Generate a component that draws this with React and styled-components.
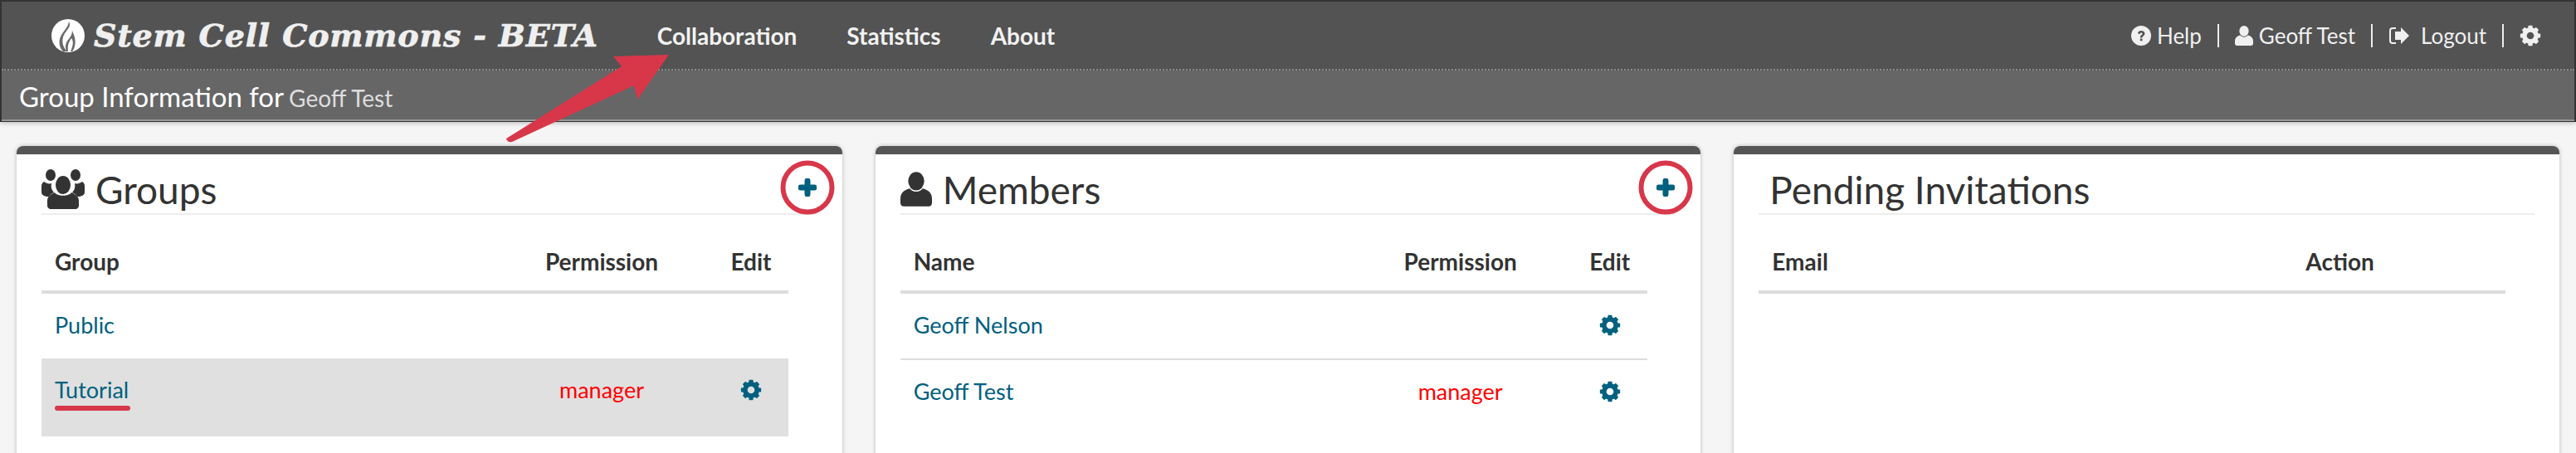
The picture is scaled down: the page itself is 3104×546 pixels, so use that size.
import React from 'react'
import styled, { createGlobalStyle } from 'styled-components'

const GlobalStyle = createGlobalStyle`
  html, body { margin: 0; padding: 0; background: #f5f5f5; }
  body { font-family: "Lato", "Noto Sans", sans-serif; color: #333; }
`

const Page = styled.div`
  position: relative;
  height: 546px;
  overflow: hidden;
  background: #f5f5f5;
`

const Header = styled.header`
  border: 2px solid #333;
  border-bottom-width: 1px;
  box-shadow: 0 2px 5px rgba(0, 0, 0, 0.2);
`

const NavBar = styled.nav`
  display: flex;
  align-items: center;
  height: 81px;
  padding: 0 40px 0 60px;
  background: #535353;
  border-bottom: 2px dotted #8a8a8a;
  box-sizing: content-box;
`

const Brand = styled.div`
  display: flex;
  align-items: center;
  gap: 11px;
  margin-right: 41px;
`

const BrandName = styled.span`
  font-family: "DejaVu Serif", serif;
  font-weight: 700;
  font-style: italic;
  font-size: 38px;
  letter-spacing: 0.8px;
  -webkit-text-stroke: 0.7px #efefef;
  color: #efefef;
  white-space: nowrap;
`

const NavLink = styled.a`
  margin: 0 30px;
  font-size: 28px;
  font-weight: 700;
  color: #f2f2f2;
  white-space: nowrap;
`

const UserMenu = styled.div`
  display: flex;
  align-items: center;
  margin-left: auto;
  font-size: 26px;
  color: #f0f0f0;
`

const MenuItem = styled.span`
  display: flex;
  align-items: center;
  gap: ${(p) => p.$gap || 7}px;
  white-space: nowrap;
`

const MenuDivider = styled.span`
  width: 2px;
  height: 28px;
  margin: 0 19px;
  background: #e8eef2;
`

const SubHeader = styled.div`
  display: flex;
  align-items: baseline;
  gap: 6px;
  height: 61px;
  padding: 11px 21px 0;
  box-sizing: border-box;
  background: #666;
  border-bottom: 2px solid #999;
  color: #fff;
  font-size: 33px;
`

const SubName = styled.span`
  font-size: 28px;
  color: #ddd;
`

const Cards = styled.main`
  display: grid;
  grid-template-columns: repeat(3, 1fr);
  gap: 40px;
  padding: 29px 20px 0;
`

const Card = styled.section`
  height: 460px;
  padding: 0 30px;
  background: #fff;
  border-top: 10px solid #555;
  border-radius: 8px 8px 0 0;
  box-shadow: 0 0 5px rgba(0, 0, 0, 0.25);
`

const CardTitle = styled.div`
  display: flex;
  align-items: center;
  justify-content: space-between;
  height: 71px;
  padding: 0 ${(p) => (p.$plain ? 13 : 0)}px;
  border-bottom: 2px solid #eee;
`

const TitleText = styled.h2`
  display: flex;
  align-items: center;
  gap: 13px;
  margin: 13px 0 0;
  font-size: 46px;
  font-weight: 400;
  color: #333;
  white-space: nowrap;
`

const AddButton = styled.span`
  position: relative;
  display: flex;
  margin: 9px 1px 0 0;
`

const Ring = styled.span`
  position: absolute;
  left: 50%;
  top: 50%;
  width: 53px;
  height: 53px;
  border: 6px solid #d8374a;
  border-radius: 50%;
  transform: translate(-50%, -50%);
`

const Table = styled.div`
  width: 900px;
  margin-top: 0;
`

const Row = styled.div`
  display: grid;
  grid-template-columns: ${(p) => p.$columns};
  align-items: start;
  box-sizing: border-box;
  height: ${(p) => p.$height}px;
  padding-top: ${(p) => p.$top}px;
  background: ${(p) => (p.$selected ? '#e0e0e0' : 'transparent')};
  border-bottom: ${(p) => (p.$rule ? `${p.$rule}px solid #ddd` : 'none')};
  font-size: 27px;
  line-height: 36px;
`

const HeadCell = styled.div`
  padding-left: ${(p) => (p.$center ? 0 : 16)}px;
  text-align: ${(p) => (p.$center ? 'center' : 'left')};
  font-size: 28px;
  font-weight: 700;
  color: #333;
`

const Cell = styled.div`
  display: flex;
  justify-content: ${(p) => (p.$center ? 'center' : 'flex-start')};
  padding-left: ${(p) => (p.$center ? 0 : 16)}px;
  height: 36px;
  align-items: center;
  color: ${(p) => (p.$danger ? '#f00' : '#00607f')};
`

const LinkText = styled.a`
  position: relative;
  color: #00607f;
`

const Scribble = styled.span`
  position: absolute;
  left: 0;
  right: -2px;
  bottom: -7px;
  height: 6px;
  border-radius: 3px;
  background: #d8374a;
`

const ArrowLayer = styled.svg`
  position: absolute;
  left: 0;
  top: 0;
  pointer-events: none;
`

const Gear = ({ size = 26, color = '#00607f' }) => (
  <svg width={size} height={size} viewBox="0 0 24 24">
    <circle cx="12" cy="12" r="6.6" fill="none" stroke={color} strokeWidth="5.2" />
    {[0, 45, 90, 135, 180, 225, 270, 315].map((a) => (
      <rect key={a} x="9.6" y="0.8" width="4.8" height="5" rx="0.8" fill={color} transform={`rotate(${a} 12 12)`} />
    ))}
  </svg>
)

const Person = ({ width = 22, height = 24, color = '#f0f0f0' }) => (
  <svg width={width} height={height} viewBox="0 0 22 24">
    <ellipse cx="11" cy="6.4" rx="5.6" ry="6.4" fill={color} />
    <path d="M6.6 11.6C8 14.4 14 14.4 15.4 11.6C19 12.4 22 14.4 22 18.5V21.5C22 23 21 24 19.5 24H2.5C1 24 0 23 0 21.5V18.5C0 14.4 3 12.4 6.6 11.6Z" fill={color} />
  </svg>
)

const Group = () => (
  <svg width="52" height="48" viewBox="0 0 52 48">
    <g fill="#333">
      <ellipse cx="11" cy="7" rx="6" ry="7" />
      <ellipse cx="41" cy="7" rx="6" ry="7" />
      <path d="M3 15C6 17 9 18 12 17C11 21 12 25 15 28C12 29 10 31 9 33C4 33 0 31 0 28V20C0 18 1 16 3 15Z" />
      <path d="M49 15C46 17 43 18 40 17C41 21 40 25 37 28C40 29 42 31 43 33C48 33 52 31 52 28V20C52 18 51 16 49 15Z" />
      <ellipse cx="26" cy="19" rx="9" ry="11" />
      <path d="M16 28C19 33 33 33 36 28C41 30 45 33 45 38V44C45 46 43 48 41 48H11C9 48 7 46 7 44V38C7 33 11 30 16 28Z" />
    </g>
  </svg>
)

const Flame = () => (
  <svg width="40" height="40" viewBox="0 0 40 40">
    <circle cx="20" cy="20" r="20" fill="#fff" />
    <path d="M21 3C25 10 16 14 14 22C12 29 15 35 19 39H14C9 34 8 26 12 19C15 14 20 10 21 3Z" fill="#6a6a6a" />
    <path d="M25 14C28 21 31 28 26 38C25 39 24 39 23 39C26 32 27 27 24 23C22 27 19 29 20 39H18C16 33 17 28 21 24C23 21 25 18 25 14Z" fill="#6a6a6a" />
  </svg>
)

const Help = () => (
  <svg width="24" height="24" viewBox="0 0 24 24">
    <circle cx="12" cy="12" r="12" fill="#f0f0f0" />
    <path d="M8 9.4C8.2 7 10 6 12.2 6C14.6 6 16.4 7.4 16.4 9.4C16.4 12 13.4 12.2 13.4 14.4H10.8C10.8 11.2 13.6 11 13.6 9.5C13.6 8.8 13 8.4 12.1 8.4C11.2 8.4 10.8 8.9 10.6 9.9Z" fill="#535353" />
    <rect x="10.8" y="15.6" width="2.7" height="2.7" fill="#535353" />
  </svg>
)

const SignOut = () => (
  <svg width="25" height="22" viewBox="0 0 25 22">
    <path d="M9 2H5C3 2 2 3 2 5V17C2 19 3 20 5 20H9" fill="none" stroke="#f0f0f0" strokeWidth="2" />
    <path d="M25 11L15 1V6H8V16H15V21Z" fill="#f0f0f0" />
  </svg>
)

const Plus = () => (
  <svg width="22" height="22" viewBox="0 0 22 22">
    <path d="M11 3V19M3 11H19" stroke="#00607f" strokeWidth="7" strokeLinecap="round" />
  </svg>
)

const memberColumns = '540px 270px 90px'
const inviteColumns = '643px 257px'

export default function App() {
  return (
    <Page>
      <GlobalStyle />
      <Header>
        <NavBar>
          <Brand>
            <Flame />
            <BrandName>Stem Cell Commons - BETA</BrandName>
          </Brand>
          <NavLink>Collaboration</NavLink>
          <NavLink>Statistics</NavLink>
          <NavLink>About</NavLink>
          <UserMenu>
            <MenuItem><Help />Help</MenuItem>
            <MenuDivider />
            <MenuItem><Person />Geoff Test</MenuItem>
            <MenuDivider />
            <MenuItem $gap={14}><SignOut />Logout</MenuItem>
            <MenuDivider />
            <MenuItem><Gear color="#f0f0f0" /></MenuItem>
          </UserMenu>
        </NavBar>
        <SubHeader>Group Information for <SubName>Geoff Test</SubName></SubHeader>
      </Header>

      <Cards>
        <Card>
          <CardTitle>
            <TitleText><Group />Groups</TitleText>
            <AddButton><Ring /><Plus /></AddButton>
          </CardTitle>
          <Table>
            <Row $columns={memberColumns} $height={95} $top={38} $rule={4}>
              <HeadCell>Group</HeadCell>
              <HeadCell $center>Permission</HeadCell>
              <HeadCell $center>Edit</HeadCell>
            </Row>
            <Row $columns={memberColumns} $height={78} $top={20}>
              <Cell><LinkText>Public</LinkText></Cell>
            </Row>
            <Row $columns={memberColumns} $height={94} $top={20} $selected>
              <Cell><LinkText>Tutorial<Scribble /></LinkText></Cell>
              <Cell $center $danger>manager</Cell>
              <Cell $center><Gear /></Cell>
            </Row>
          </Table>
        </Card>

        <Card>
          <CardTitle>
            <TitleText><Person width={38} height={42} color="#333" />Members</TitleText>
            <AddButton><Ring /><Plus /></AddButton>
          </CardTitle>
          <Table>
            <Row $columns={memberColumns} $height={95} $top={38} $rule={4}>
              <HeadCell>Name</HeadCell>
              <HeadCell $center>Permission</HeadCell>
              <HeadCell $center>Edit</HeadCell>
            </Row>
            <Row $columns={memberColumns} $height={80} $top={20} $rule={2}>
              <Cell><LinkText>Geoff Nelson</LinkText></Cell>
              <div />
              <Cell $center><Gear /></Cell>
            </Row>
            <Row $columns={memberColumns} $height={78} $top={20}>
              <Cell><LinkText>Geoff Test</LinkText></Cell>
              <Cell $center $danger>manager</Cell>
              <Cell $center><Gear /></Cell>
            </Row>
          </Table>
        </Card>

        <Card>
          <CardTitle $plain>
            <TitleText>Pending Invitations</TitleText>
          </CardTitle>
          <Table>
            <Row $columns={inviteColumns} $height={95} $top={38} $rule={4}>
              <HeadCell>Email</HeadCell>
              <HeadCell>Action</HeadCell>
            </Row>
          </Table>
        </Card>
      </Cards>

      <ArrowLayer width="3104" height="546" viewBox="0 0 3104 546">
        <path d="M806 66L739 68L749 80L610 167Q611 172 617 171L764 103L768 120Z" fill="#d8374a" />
      </ArrowLayer>
    </Page>
  )
}
